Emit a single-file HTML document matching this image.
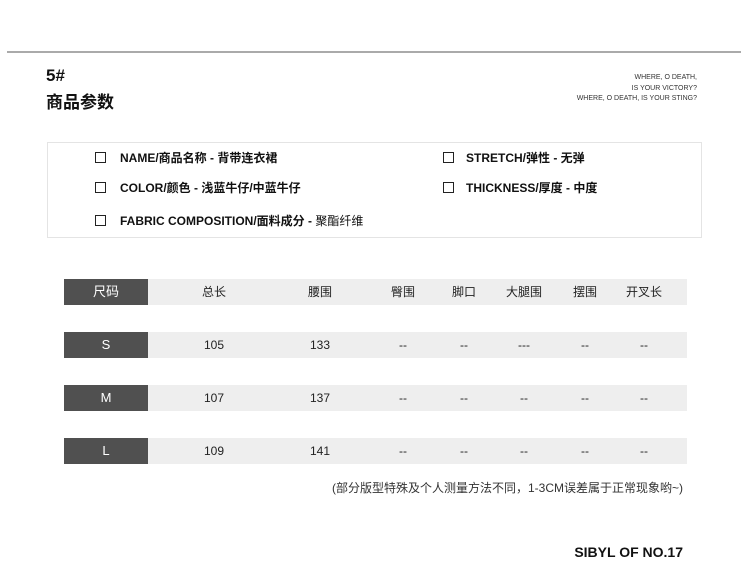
<!DOCTYPE html><html><head><meta charset="utf-8"><style>
body{margin:0;width:750px;height:563px;background:#fff;font-family:"Liberation Sans","Noto Sans CJK SC",sans-serif;color:#111;position:relative;overflow:hidden}
.a{position:absolute;white-space:nowrap}
.cb{position:absolute;width:9px;height:9px;border:1px solid #222}
.it{position:absolute;font-size:12px;font-weight:bold;white-space:nowrap}
.row{position:absolute;left:64px;width:623px;height:26px;background:#eee;font-size:12px;color:#222}
.row .d{position:absolute;left:0;top:0;width:84px;height:26px;background:#505050;color:#fff;text-align:center;line-height:26px;font-size:13px}
.row span{position:absolute;top:0;line-height:26px;transform:translateX(-50%)}
</style></head><body>
<div class="a" style="left:7px;top:51px;width:734px;height:2px;background:#aaa"></div>
<div class="a" style="left:46px;top:66px;font-size:17px;font-weight:bold">5#</div>
<div class="a" style="left:46px;top:88px;font-size:17px;font-weight:bold">商品参数</div>
<div class="a" style="right:53px;top:73px;font-size:7px;line-height:10.5px;text-align:right;color:#333">WHERE, O DEATH,<br>IS YOUR VICTORY?<br>WHERE, O DEATH, IS YOUR STING?</div>
<div class="a" style="left:47px;top:142px;width:653px;height:94px;border:1px solid #e4e4e4"></div>
<div class="cb" style="left:95px;top:152px"></div><div class="it" style="left:120px;top:149px">NAME/商品名称 - 背带连衣裙</div>
<div class="cb" style="left:443px;top:152px"></div><div class="it" style="left:466px;top:149px">STRETCH/弹性 - 无弹</div>
<div class="cb" style="left:95px;top:182px"></div><div class="it" style="left:120px;top:179px">COLOR/颜色 - 浅蓝牛仔/中蓝牛仔</div>
<div class="cb" style="left:443px;top:182px"></div><div class="it" style="left:466px;top:179px">THICKNESS/厚度 - 中度</div>
<div class="cb" style="left:95px;top:215px"></div><div class="it" style="left:120px;top:212px">FABRIC COMPOSITION/面料成分 - <span style="font-weight:normal">聚酯纤维</span></div>
<div class="row" style="top:279px"><div class="d">尺码</div><span style="left:150px">总长</span><span style="left:256px">腰围</span><span style="left:339px">臀围</span><span style="left:400px">脚口</span><span style="left:460px">大腿围</span><span style="left:521px">摆围</span><span style="left:580px">开叉长</span></div>
<div class="row" style="top:332px"><div class="d">S</div><span style="left:150px">105</span><span style="left:256px">133</span><span style="left:339px">--</span><span style="left:400px">--</span><span style="left:460px">---</span><span style="left:521px">--</span><span style="left:580px">--</span></div>
<div class="row" style="top:385px"><div class="d">M</div><span style="left:150px">107</span><span style="left:256px">137</span><span style="left:339px">--</span><span style="left:400px">--</span><span style="left:460px">--</span><span style="left:521px">--</span><span style="left:580px">--</span></div>
<div class="row" style="top:438px"><div class="d">L</div><span style="left:150px">109</span><span style="left:256px">141</span><span style="left:339px">--</span><span style="left:400px">--</span><span style="left:460px">--</span><span style="left:521px">--</span><span style="left:580px">--</span></div>
<div class="a" style="right:67px;top:479px;font-size:12px;color:#333">(部分版型特殊及个人测量方法不同，1-3CM误差属于正常现象哟~)</div>
<div class="a" style="right:67px;top:544px;font-size:14px;font-weight:bold">SIBYL OF NO.17</div>
</body></html>
